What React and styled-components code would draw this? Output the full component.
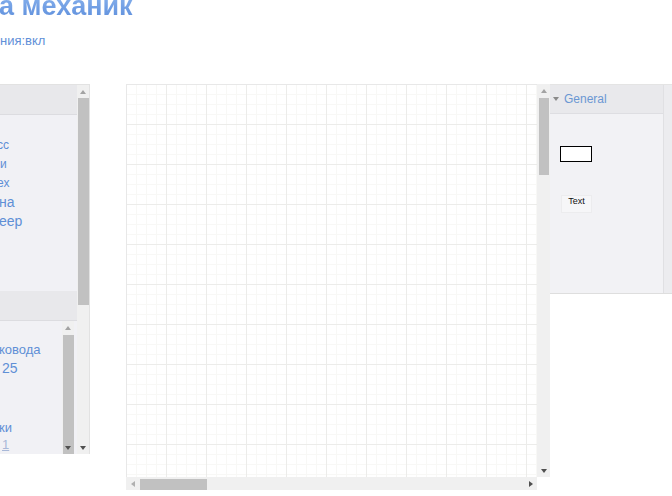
import React from "react";
import styled, { createGlobalStyle } from "styled-components";

const Global = createGlobalStyle`
  html, body { margin: 0; padding: 0; background: #fff; overflow: hidden; }
  body { font-family: "Liberation Sans", Arial, sans-serif; }
`;

const Page = styled.div`
  width: 672px;
  height: 496px;
  overflow: hidden;
  position: relative;
`;

const Top = styled.header`
  height: 84px;
  display: flex;
  flex-direction: column;
`;

const Title = styled.h1`
  margin: -7px 0 0 -1px;
  font-size: 27px;
  line-height: 26px;
  font-weight: bold;
  white-space: nowrap;
  color: #6d9de4;
  background: linear-gradient(180deg, #8ab4ee 0%, #5f8fdc 100%);
  -webkit-background-clip: text;
  background-clip: text;
  -webkit-text-fill-color: transparent;
`;

const Status = styled.div`
  margin-top: 14px;
  font-size: 13px;
  line-height: 15px;
  color: #5f90d8;
  white-space: nowrap;
`;

const Main = styled.main`
  display: flex;
  align-items: flex-start;
`;

/* ---------- scrollbars ---------- */
const VBar = styled.div`
  width: ${(p) => p.$w || 12}px;
  height: 100%;
  display: flex;
  flex-direction: column;
  background: #f0f0f0;
  flex: none;
`;
const HBar = styled.div`
  height: 100%;
  width: 100%;
  display: flex;
  align-items: center;
  background: #f0f0f0;
`;
const ArrowCell = styled.div`
  flex: none;
  width: ${(p) => (p.$h ? "13px" : "100%")};
  height: ${(p) => (p.$h ? "100%" : "13px")};
  display: flex;
  align-items: center;
  justify-content: center;
`;
const Tri = styled.span`
  width: 0;
  height: 0;
  display: block;
  ${(p) =>
    p.$dir === "up"
      ? `border-left:3.5px solid transparent;border-right:3.5px solid transparent;border-bottom:4px solid ${p.$c};`
      : p.$dir === "down"
      ? `border-left:3.5px solid transparent;border-right:3.5px solid transparent;border-top:4px solid ${p.$c};`
      : p.$dir === "left"
      ? `border-top:3.5px solid transparent;border-bottom:3.5px solid transparent;border-right:4px solid ${p.$c};`
      : `border-top:3.5px solid transparent;border-bottom:3.5px solid transparent;border-left:4px solid ${p.$c};`}
`;
const VTrack = styled.div`
  flex: 1;
  min-height: 0;
  display: flex;
  flex-direction: column;
  align-items: center;
`;
const VThumb = styled.div`
  width: ${(p) => p.$w || 10}px;
  height: ${(p) => p.$len}px;
  margin-top: ${(p) => p.$off}px;
  background: #c1c1c1;
  flex: none;
`;
const HTrack = styled.div`
  flex: 1;
  height: 100%;
  display: flex;
  align-items: center;
`;
const HThumb = styled.div`
  height: 11px;
  width: ${(p) => p.$len}px;
  margin-left: ${(p) => p.$off}px;
  margin-top: 1px;
  background: #c1c1c1;
`;

const VScroll = ({ off, len, w, tw, upC = "#a3a3a3", downC = "#505050", showDown = true }) => (
  <VBar $w={w}>
    <ArrowCell>
      <Tri $dir="up" $c={upC} />
    </ArrowCell>
    <VTrack>
      <VThumb $off={off} $len={len} $w={tw} />
    </VTrack>
    <ArrowCell>{showDown && <Tri $dir="down" $c={downC} />}</ArrowCell>
  </VBar>
);

/* ---------- left panel ---------- */
const LeftPanel = styled.aside`
  width: 89px;
  height: 369px;
  flex: none;
  display: flex;
  border-top: 1px solid #e2e2e2;
  border-right: 1px solid #e2e2e2;
  background: #f2f2f4;
`;
const LeftContent = styled.div`
  width: 77px;
  display: flex;
  flex-direction: column;
  overflow: hidden;
`;
const SecHeader = styled.div`
  height: ${(p) => p.$h}px;
  flex: none;
  background: #e8e8eb;
  border-bottom: 1px solid #dcdce0;
  box-sizing: border-box;
`;
const SecBody = styled.div`
  height: ${(p) => p.$h}px;
  flex: none;
  background: #f1f1f5;
  box-sizing: border-box;
  padding-top: ${(p) => p.$pt}px;
  display: flex;
  flex-direction: column;
`;
const Item = styled.div`
  height: 19px;
  line-height: 19px;
  font-size: ${(p) => p.$fs || 12}px;
  color: ${(p) => p.$c || "#5f8fd6"};
  white-space: nowrap;
  margin-left: ${(p) => p.$ml || 0}px;
  margin-top: ${(p) => p.$mt || 0}px;
  text-decoration: ${(p) => (p.$u ? "underline" : "none")};
`;
const Sec2 = styled.div`
  flex: 1;
  display: flex;
  background: #f1f1f5;
  min-height: 0;
`;
const Sec2List = styled.div`
  width: 62px;
  flex: none;
  padding-top: 19px;
  display: flex;
  flex-direction: column;
  overflow: hidden;
`;

/* ---------- canvas ---------- */
const CanvasFrame = styled.section`
  margin-left: 36px;
  flex: none;
  display: grid;
  grid-template-columns: 411px 13px;
  grid-template-rows: 393px 13px;
`;
const Viewport = styled.div`
  box-sizing: border-box;
  border-left: 1px solid #e8e8e8;
  border-top: 1px solid #e8e8e8;
  background-color: #fff;
  background-image: linear-gradient(to right, #ececea 1px, transparent 1px),
    linear-gradient(to bottom, #ececea 1px, transparent 1px),
    linear-gradient(to right, #f8f8f6 1px, transparent 1px),
    linear-gradient(to bottom, #f8f8f6 1px, transparent 1px);
  background-size: 40px 40px, 40px 40px, 10px 10px, 10px 10px;
  background-position: -1px -1px;
`;
const Corner = styled.div`
  background: #fff;
`;

/* ---------- right panel ---------- */
const RightPanel = styled.aside`
  flex: 1;
  height: 208px;
  display: flex;
  border-top: 1px solid #e4e4e4;
  border-bottom: 1px solid #dedede;
  background: #f2f2f5;
`;
const RightMain = styled.div`
  flex: 1;
  display: flex;
  flex-direction: column;
`;
const RightStrip = styled.div`
  width: 8px;
  flex: none;
  background: #ececef;
  border-left: 1px solid #e0e0e3;
`;
const GroupHeader = styled.div`
  height: 29px;
  flex: none;
  box-sizing: border-box;
  background: #e9e9ec;
  border-bottom: 1px solid #dedee2;
  display: flex;
  align-items: center;
  padding-left: 3px;
  gap: 5px;
  font-size: 12px;
  color: #6b97d3;
`;
const GroupBody = styled.div`
  flex: 1;
  padding: 32px 0 0 10px;
  display: flex;
  flex-direction: column;
  align-items: flex-start;
`;
const RectShape = styled.div`
  width: 32px;
  height: 16px;
  box-sizing: border-box;
  border: 1px solid #000;
  background: #fff;
`;
const TextShape = styled.div`
  margin-top: 33px;
  margin-left: 1px;
  width: 31px;
  height: 18px;
  box-sizing: border-box;
  border: 1px solid #ececee;
  background: #f6f6f8;
  font-size: 9px;
  line-height: 9px;
  padding-top: 1px;
  color: #111;
  text-align: center;
`;

export default function App() {
  return (
    <Page>
      <Global />
      <Top>
        <Title>а механик</Title>
        <Status>ния:вкл</Status>
      </Top>
      <Main>
        <LeftPanel>
          <LeftContent>
            <SecHeader $h={30} />
            <SecBody $h={176} $pt={21}>
              <Item $ml={-3}>сс</Item>
              <Item>и</Item>
              <Item $ml={-3}>ех</Item>
              <Item $fs={14} $ml={-1}>на</Item>
              <Item $fs={14} $ml={-1}>еер</Item>
            </SecBody>
            <SecHeader $h={30} />
            <Sec2>
              <Sec2List>
                <Item $fs={13} $ml={-1}>ковода</Item>
                <Item $fs={14} $ml={2}>25</Item>
                <Item $fs={13} $ml={-1} $mt={40}>ки</Item>
                <Item $fs={13} $ml={2} $mt={-2} $c="#a8b8d8" $u>
                  1
                </Item>
              </Sec2List>
              <VScroll off={1} len={130} w={12} tw={11} />
            </Sec2>
          </LeftContent>
          <VScroll off={0} len={207} w={12} tw={11} showDown />
        </LeftPanel>

        <CanvasFrame>
          <Viewport />
          <VScroll off={1} len={77} w={13} tw={10} />
          <HBar>
            <ArrowCell $h>
              <Tri $dir="left" $c="#b0b0b0" />
            </ArrowCell>
            <HTrack>
              <HThumb $off={1} $len={67} />
            </HTrack>
            <ArrowCell $h>
              <Tri $dir="right" $c="#505050" />
            </ArrowCell>
          </HBar>
          <Corner />
        </CanvasFrame>

        <RightPanel>
          <RightMain>
            <GroupHeader>
              <Tri $dir="down" $c="#8a8a8a" />
              <span>General</span>
            </GroupHeader>
            <GroupBody>
              <RectShape />
              <TextShape>Text</TextShape>
            </GroupBody>
          </RightMain>
          <RightStrip />
        </RightPanel>
      </Main>
    </Page>
  );
}
